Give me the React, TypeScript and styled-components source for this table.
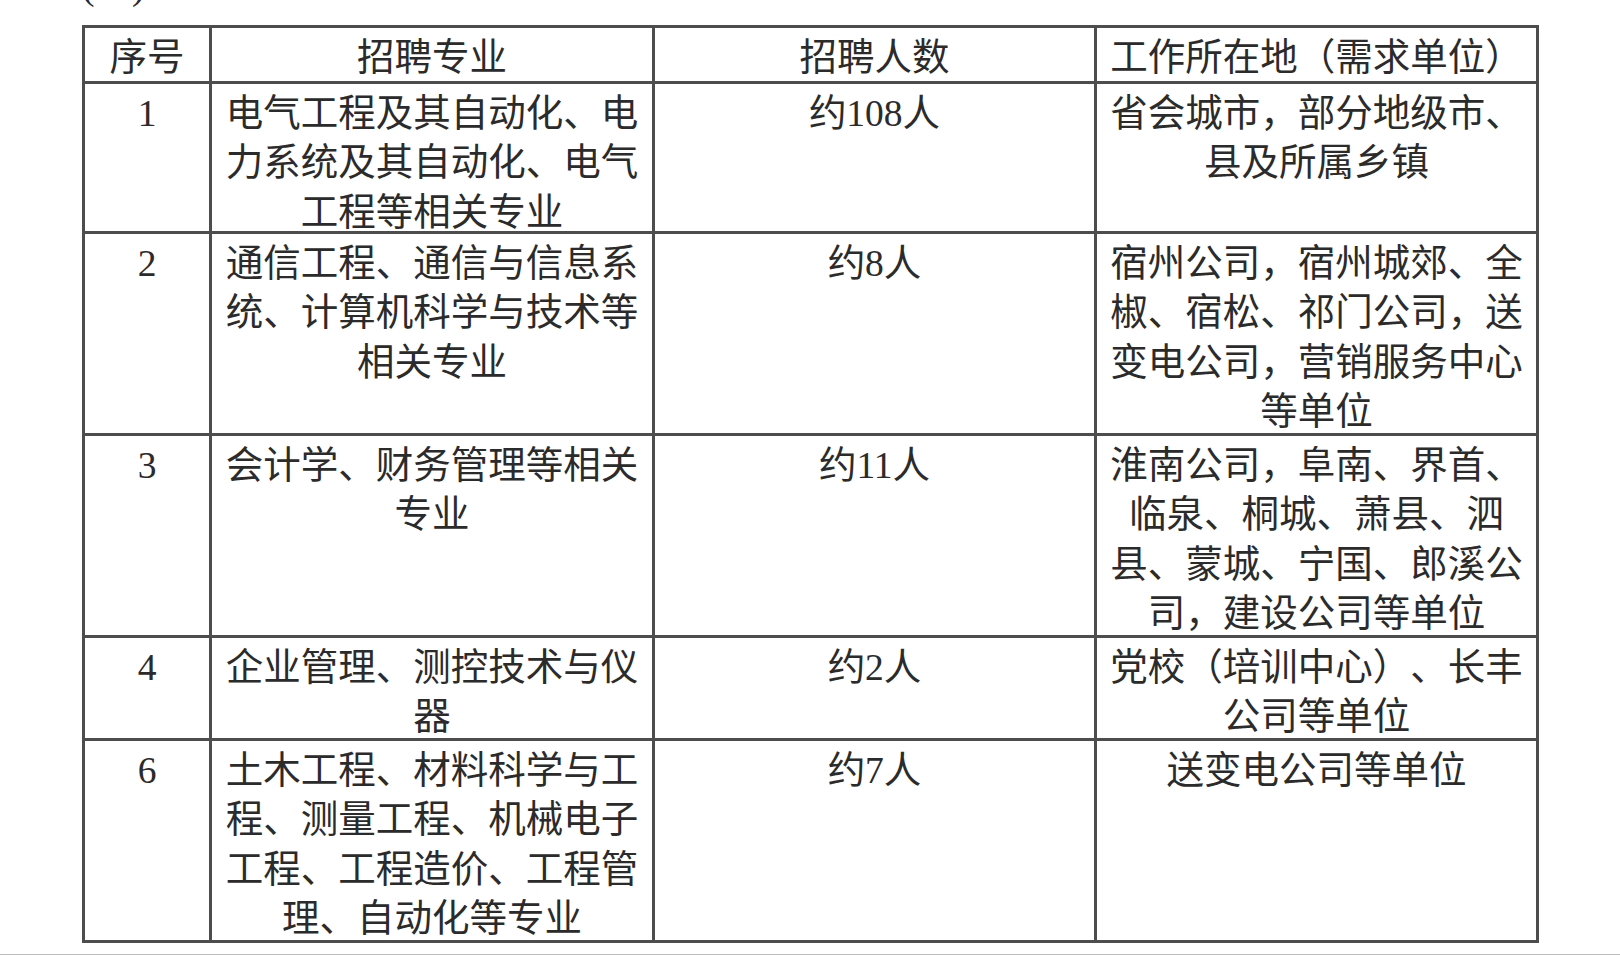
import React from 'react'
import styled, { createGlobalStyle } from 'styled-components'

interface Row {
  no: string
  major: string[]
  count: string
  place: string[]
}

const rows: Row[] = [
  {
    no: '1',
    major: ['电气工程及其自动化、电', '力系统及其自动化、电气', '工程等相关专业'],
    count: '约108人',
    place: ['省会城市，部分地级市、', '县及所属乡镇']
  },
  {
    no: '2',
    major: ['通信工程、通信与信息系', '统、计算机科学与技术等', '相关专业'],
    count: '约8人',
    place: ['宿州公司，宿州城郊、全', '椒、宿松、祁门公司，送', '变电公司，营销服务中心', '等单位']
  },
  {
    no: '3',
    major: ['会计学、财务管理等相关', '专业'],
    count: '约11人',
    place: ['淮南公司，阜南、界首、', '临泉、桐城、萧县、泗', '县、蒙城、宁国、郎溪公', '司，建设公司等单位']
  },
  {
    no: '4',
    major: ['企业管理、测控技术与仪', '器'],
    count: '约2人',
    place: ['党校（培训中心）、长丰', '公司等单位']
  },
  {
    no: '6',
    major: ['土木工程、材料科学与工', '程、测量工程、机械电子', '工程、工程造价、工程管', '理、自动化等专业'],
    count: '约7人',
    place: ['送变电公司等单位']
  }
]

// row heights measured from border to border
const rowHeights = [150, 202, 202, 103, 202]

const Lines: React.FC<{ lines: string[] }> = ({ lines }) => (
  <Content>
    {lines.map((line, i) => (
      <Line key={i}>{line}</Line>
    ))}
  </Content>
)

const App: React.FC = () => {
  return (
    <Page>
      <GlobalStyle />
      <Caption>(二)</Caption>
      <Table>
        <colgroup>
          <col style={{ width: 127 }} />
          <col style={{ width: 443 }} />
          <col style={{ width: 442 }} />
          <col style={{ width: 442 }} />
        </colgroup>
        <thead>
          <TableRow height={56}>
            <HeadCell><Lines lines={['序号']} /></HeadCell>
            <HeadCell><Lines lines={['招聘专业']} /></HeadCell>
            <HeadCell><Lines lines={['招聘人数']} /></HeadCell>
            <HeadCell><Lines lines={['工作所在地（需求单位）']} /></HeadCell>
          </TableRow>
        </thead>
        <tbody>
          {rows.map((row, i) => (
            <TableRow key={row.no} height={rowHeights[i]}>
              <Cell><Lines lines={[row.no]} /></Cell>
              <Cell><Lines lines={row.major} /></Cell>
              <Cell><Lines lines={[row.count]} /></Cell>
              <Cell><Lines lines={row.place} /></Cell>
            </TableRow>
          ))}
        </tbody>
      </Table>
      <PageEdge />
    </Page>
  )
}

const GlobalStyle = createGlobalStyle`
  html, body {
    margin: 0;
    padding: 0;
    background: #ffffff;
  }
  body {
    font-family: "Liberation Serif", "Noto Sans CJK SC", serif;
  }
`
const Page = styled.div`
  width: 1620px;
  height: 955px;
  overflow: hidden;
  padding-left: 82px;
  box-sizing: border-box;
  color: #2b2b2b;
  font-family: "Liberation Serif", "Noto Sans CJK SC", serif;
  font-size: 37.5px;
  text-spacing-trim: space-all;
`
const Caption = styled.div`
  margin-top: -38px;
  height: 49.5px;
  line-height: 49.5px;
  margin-bottom: 13px;
`
const Table = styled.table`
  border-collapse: collapse;
  table-layout: fixed;
  width: 1456px;
  border: 3px solid #4d4d4d;
`
const TableRow = styled.tr<{ height: number }>`
  height: ${({ height }) => height}px;
`
const Cell = styled.td`
  border: 3px solid #4d4d4d;
  padding: 5px 4px 0;
  vertical-align: top;
  text-align: center;
  line-height: 49.5px;
`
const HeadCell = styled(Cell).attrs({ as: 'th' })`
  font-weight: normal;
`
const Content = styled.div`
  margin-bottom: -8px;
`
const Line = styled.span`
  display: block;
  white-space: nowrap;
`
const PageEdge = styled.div`
  margin-left: -82px;
  margin-top: 11px;
  width: 1620px;
  border-top: 2px solid #bdbdbd;
`

export default App
